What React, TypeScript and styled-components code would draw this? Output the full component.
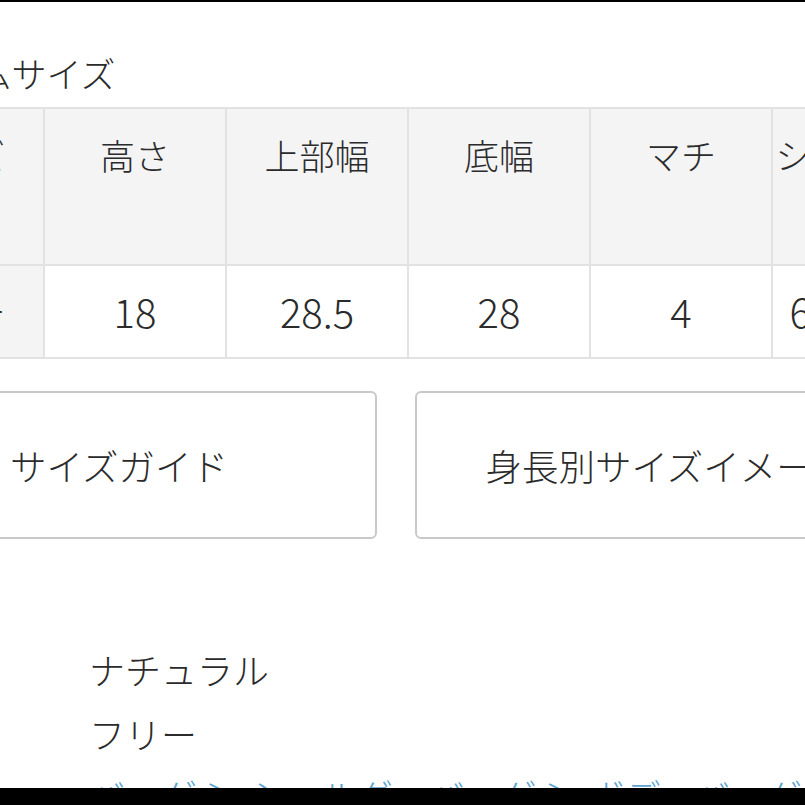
import React, { ReactElement } from 'react'
import styled, { createGlobalStyle } from 'styled-components'

const columns = ['高さ', '上部幅', '底幅', 'マチ', 'ショルダー']
const values = ['18', '28.5', '28', '4', '65〜125']

const specs = [
  { label: 'カラー', value: 'ナチュラル', link: false },
  { label: 'サイズ', value: 'フリー', link: false },
  { label: 'カテゴリ', value: 'バッグ ＞ ショルダーバッグ ＞ ボディバッグ', link: true },
]

const App: React.FC = (): ReactElement => {
  return (
    <Screen>
      <GlobalStyle />
      <Bar $height={2} />
      <Viewport>
        <Content>
          <Title>アイテムサイズ</Title>
          <SizeTable>
            <thead>
              <tr>
                <HeadCell>サイズ</HeadCell>
                {columns.map((c) => (
                  <HeadCell key={c}>{c}</HeadCell>
                ))}
              </tr>
            </thead>
            <tbody>
              <tr>
                <RowHead>フリー</RowHead>
                {values.map((v, i) => (
                  <ValueCell key={i}>{v}</ValueCell>
                ))}
              </tr>
            </tbody>
          </SizeTable>
          <ButtonRow>
            <GuideButton $width={516}>サイズガイド</GuideButton>
            <GuideButton $width={504}>身長別サイズイメージ</GuideButton>
          </ButtonRow>
          <SpecList>
            {specs.map((s) => (
              <React.Fragment key={s.label}>
                <SpecLabel $link={s.link}>{s.label}</SpecLabel>
                <SpecValue $link={s.link}>{s.value}</SpecValue>
              </React.Fragment>
            ))}
          </SpecList>
        </Content>
      </Viewport>
      <Bar $height={17} />
    </Screen>
  )
}

const GlobalStyle = createGlobalStyle`
  html, body {
    margin: 0;
    padding: 0;
    background: #fff;
    overflow: hidden;
  }
`

const Screen = styled.div`
  width: 805px;
  height: 805px;
  display: flex;
  flex-direction: column;
  font-family: 'Noto Sans CJK JP', 'Noto Sans', sans-serif;
  font-weight: 300;
  color: #2b2b2b;
`

const Bar = styled.div<{ $height: number }>`
  flex: 0 0 ${(p) => p.$height}px;
  background: #000;
`

const Viewport = styled.div`
  flex: 1;
  overflow: hidden;
  background: #fff;
`

const Content = styled.div`
  margin-left: -139px;
  width: 1120px;
`

const Title = styled.h2`
  margin: 47px 0 10px 14px;
  font-size: 35px;
  font-weight: 300;
  line-height: 48px;
`

const SizeTable = styled.table`
  border-collapse: collapse;
  table-layout: fixed;
  font-size: 35px;
  line-height: 48px;

  th,
  td {
    width: 180px;
    border: 2px solid #e2e2e2;
    text-align: center;
    font-weight: 300;
    white-space: nowrap;
  }
`

const HeadCell = styled.th`
  background: #f4f4f4;
  vertical-align: top;
  padding: 22px 0 85px;
`

const RowHead = styled.th`
  background: #f4f4f4;
  padding: 21px 0 22px;
`

const ValueCell = styled.td`
  background: #fff;
  padding: 21px 0 22px;
  font-size: 40px;
`

const ButtonRow = styled.div`
  display: flex;
  gap: 38px;
  margin-top: 32px;
`

const GuideButton = styled.button<{ $width: number }>`
  flex: 0 0 ${(p) => p.$width}px;
  height: 148px;
  border: 2px solid #c9c9c9;
  border-radius: 6px;
  background: #fff;
  font-family: inherit;
  font-weight: 300;
  font-size: 36.5px;
  color: #2b2b2b;
  padding: 0;
  white-space: nowrap;
`

const SpecList = styled.dl`
  display: grid;
  grid-template-columns: 232px 1fr;
  margin: 98px 0 0;
  font-size: 36px;
  line-height: 64px;
`

const SpecLabel = styled.dt<{ $link: boolean }>`
  margin: ${(p) => (p.$link ? '-2px' : '0')} 0 0;
`

const SpecValue = styled.dd<{ $link: boolean }>`
  margin: ${(p) => (p.$link ? '-2px' : '0')} 0 0 -4px;
  white-space: nowrap;
  color: ${(p) => (p.$link ? '#5ea4cf' : '#2b2b2b')};
`

export default App
